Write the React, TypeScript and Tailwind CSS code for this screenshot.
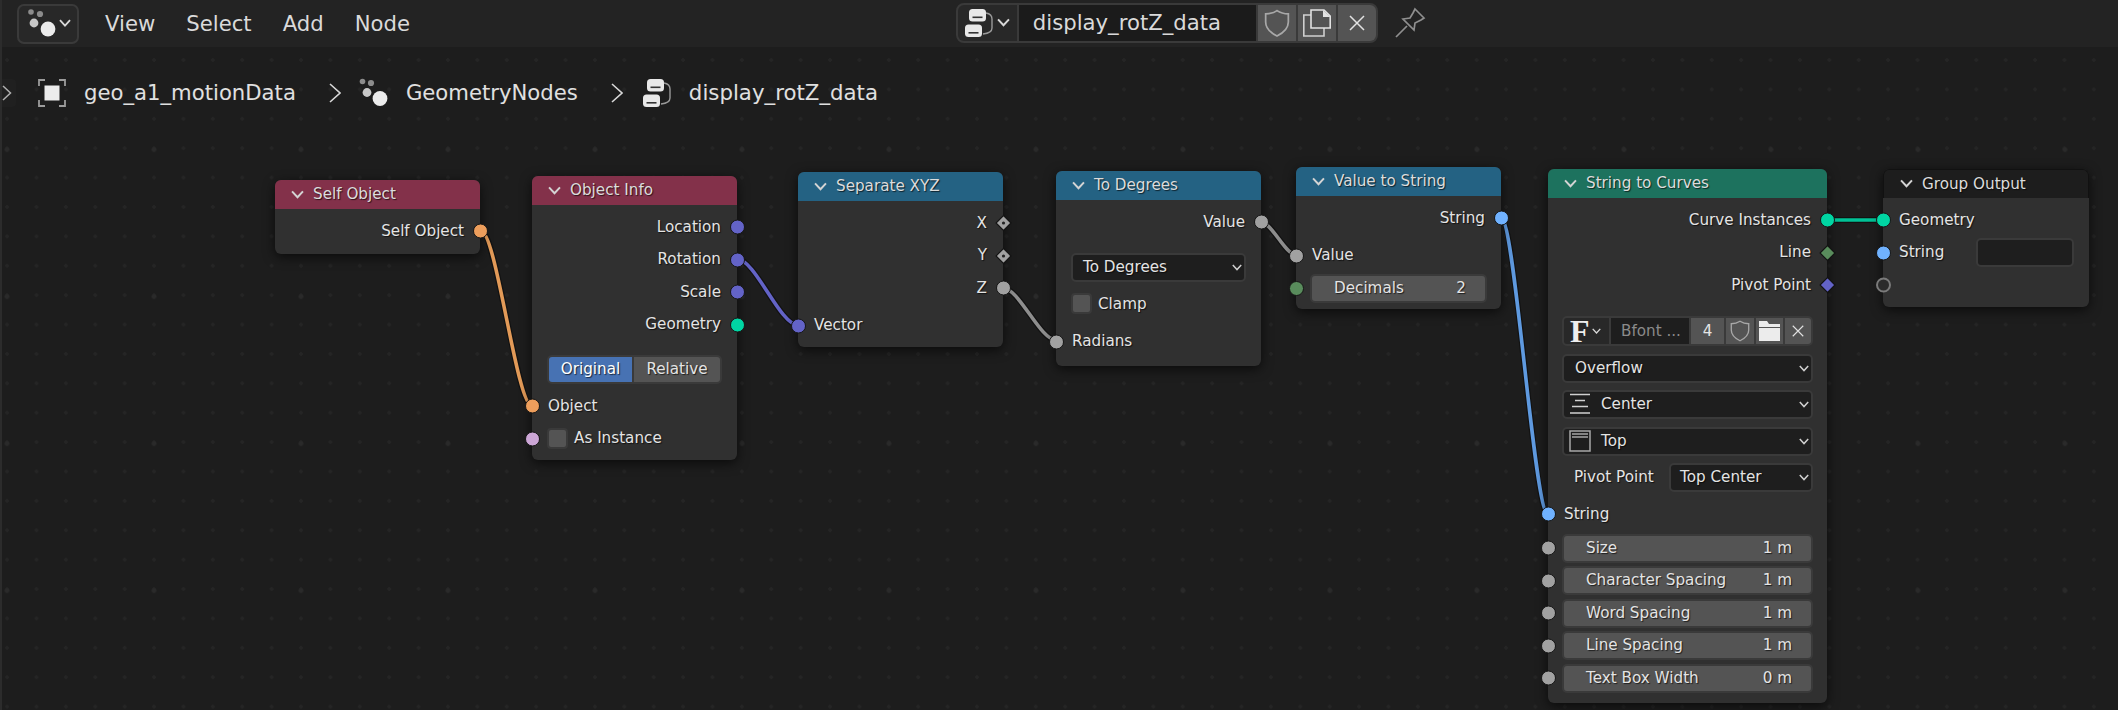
import React from "react";

const FONT = "[font-family:'DejaVu_Sans',sans-serif]";
const TS = "[text-shadow:1px_1px_1px_rgba(0,0,0,0.65)]";

function Chevron({ className = "", size = 10, color = "#d8d8d8", sw = 1.5 }: { className?: string; size?: number; color?: string; sw?: number }) {
  return (
    <svg width={size} height={size * 0.7} viewBox="0 0 10 7" className={className} fill="none">
      <path d="M0.8 1 L5 5.6 L9.2 1" stroke={color} strokeWidth={sw} />
    </svg>
  );
}

function NodesIcon({ className = "" }: { className?: string }) {
  return (
    <svg width="30" height="30" viewBox="0 0 30 30" className={className}>
      <circle cx="3.5" cy="3.5" r="2.8" fill="#8c8c8c" />
      <circle cx="12" cy="5" r="3.1" fill="#8c8c8c" />
      <circle cx="8" cy="14.5" r="4.4" fill="#c8c8c8" />
      <circle cx="21" cy="20.5" r="7.4" fill="#ececec" />
    </svg>
  );
}

function GroupIcon({ className = "" }: { className?: string }) {
  return (
    <svg width="30" height="30" viewBox="0 0 30 30" className={className}>
      <rect x="5" y="1" width="17" height="12.5" rx="3.5" fill="#e8e8e8" />
      <rect x="8.5" y="8.5" width="10" height="1.6" fill="#333" />
      <rect x="1" y="16.5" width="17" height="12.5" rx="3.5" fill="#e8e8e8" />
      <rect x="4.5" y="24" width="10" height="1.6" fill="#333" />
      <path d="M22 5 q6 1 6 6 v9 q0 5 -9 6" fill="none" stroke="#9a9a9a" strokeWidth="1.4" />
    </svg>
  );
}

function Shield({ size = 26, color = "#a8a8a8" }: { size?: number; color?: string }) {
  return (
    <svg width={size} height={size * 1.08} viewBox="0 0 24 26" fill="none">
      <path d="M12 1.5 C15 3.5 18.5 4.5 22.5 4.5 V12 C22.5 18 18 22 12 25 C6 22 1.5 18 1.5 12 V4.5 C5.5 4.5 9 3.5 12 1.5 Z" stroke={color} strokeWidth="1.6" />
    </svg>
  );
}

function CloseX({ size = 16 }: { size?: number }) {
  return (
    <svg width={size} height={size} viewBox="0 0 16 16" fill="none">
      <path d="M1 1 L15 15 M15 1 L1 15" stroke="#e2e2e2" strokeWidth="1.5" />
    </svg>
  );
}

function TopIconButton({ children }: { children: React.ReactNode }) {
  return <div className="w-[38px] h-full bg-[#545454] flex items-center justify-center">{children}</div>;
}

function Socket({ side, color, shape = "circle", hollow = false }: { side: "l" | "r"; color: string; shape?: "circle" | "diamond" | "dotdiamond"; hollow?: boolean }) {
  const pos = side === "l" ? "left-[-7.5px]" : "right-[-7.5px]";
  if (shape !== "circle") {
    return (
      <svg width="17" height="17" viewBox="0 0 16 16" className={`absolute top-1/2 -translate-y-1/2 ${side === "l" ? "left-[-8.5px]" : "right-[-8.5px]"}`}>
        <path d="M8 1 L15 8 L8 15 L1 8 Z" fill={color} stroke="#111" strokeWidth="1" />
        {shape === "dotdiamond" && <circle cx="8" cy="8" r="1.5" fill="#222" />}
      </svg>
    );
  }
  if (hollow) {
    return <span className={`absolute top-1/2 -translate-y-1/2 ${pos} size-[15px] rounded-full border-2 border-[#7a7a7a] bg-[#2b2b2b]`} />;
  }
  return <span style={{ backgroundColor: color }} className={`absolute top-1/2 -translate-y-1/2 ${pos} size-[15px] rounded-full border border-[#161616]`} />;
}

function Output({ label, color, shape }: { label: string; color: string; shape?: "circle" | "diamond" | "dotdiamond" }) {
  return (
    <div className="relative h-[32.5px] flex items-center justify-end pr-[16px]">
      <span className={TS}>{label}</span>
      <Socket side="r" color={color} shape={shape} />
    </div>
  );
}

function Input({ label, color, hollow }: { label?: string; color: string; hollow?: boolean }) {
  return (
    <div className="relative h-[32.5px] flex items-center pl-[16px]">
      <span className={TS}>{label}</span>
      <Socket side="l" color={color} hollow={hollow} />
    </div>
  );
}

function Node({ title, head, pos, children }: { title: string; head: string; pos: string; children: React.ReactNode }) {
  return (
    <div className={`absolute ${pos} rounded-[6px] bg-[#303030] shadow-[0_3px_12px_rgba(0,0,0,0.65)] text-[15.2px] text-[#e4e4e4]`}>
      <div className={`${head} h-[29px] rounded-t-[6px] flex items-center pl-[16px] gap-[9px] text-[#dcdcdc]`}>
        <Chevron size={13} color="#d4d4d4" />
        <span className={TS}>{title}</span>
      </div>
      {children}
    </div>
  );
}

function Select({ children, className = "" }: { children: React.ReactNode; className?: string }) {
  return (
    <div className={`h-[29px] rounded-[5px] bg-[#1e1e1e] border-2 border-[#3a3a3a] flex items-center justify-between pr-[2px] ${className}`}>
      <div className="flex items-center min-w-0">{children}</div>
      <Chevron size={10} color="#d0d0d0" />
    </div>
  );
}

function Check({ label }: { label: string }) {
  return (
    <div className="flex items-center gap-[6px]">
      <span className="size-[21px] rounded-[4px] bg-[#545454] border-2 border-[#3a3a3a]" />
      <span className={TS}>{label}</span>
    </div>
  );
}

function NumField({ label, value, className = "" }: { label: string; value: string; className?: string }) {
  return (
    <div className={`h-[29px] rounded-[5px] bg-[#545454] border-2 border-[#3a3a3a] flex items-center justify-between pl-[22px] pr-[19px] ${className}`}>
      <span className={TS}>{label}</span>
      <span className={TS}>{value}</span>
    </div>
  );
}

function Link({ x1, y1, x2, y2, color }: { x1: number; y1: number; x2: number; y2: number; color: string }) {
  const d = (x2 - x1) * 0.3;
  const p = `M${x1} ${y1} C${x1 + d} ${y1} ${x2 - d} ${y2} ${x2} ${y2}`;
  return (
    <g fill="none">
      <path d={p} stroke="#121212" strokeWidth="6" />
      <path d={p} stroke={color} strokeWidth="3.6" />
    </g>
  );
}

const ORANGE = "#ed9e5c";
const VIOLET = "#6363c7";
const TEAL = "#00d6a3";
const GREY = "#a1a1a1";
const BLUE = "#70b2ff";

export default function App() {
  return (
    <div className={`${FONT} relative w-[2118px] h-[710px] overflow-hidden bg-[#1d1d1d] flex flex-col`}>
      <div className="absolute left-0 top-0 bottom-0 w-[2px] bg-[#2c2c2c] z-20" />
      {/* Header */}
      <header className="h-[47px] bg-[#232323] relative flex items-center text-[21.2px] text-[#dadada] shrink-0">
        <div className="ml-[17px] w-[62px] h-[40px] rounded-[7px] bg-[#282828] border-2 border-[#3a3a3a] flex items-center pl-[8px] gap-[2px]">
          <svg width="30" height="30" viewBox="0 0 30 30">
            <circle cx="4" cy="3" r="2.8" fill="#8c8c8c" />
            <circle cx="13" cy="5" r="3.1" fill="#8c8c8c" />
            <circle cx="7" cy="14" r="4.4" fill="#c8c8c8" />
            <circle cx="21" cy="20" r="7.4" fill="#ececec" />
          </svg>
          <Chevron size={12} />
        </div>
        <nav className="flex ml-[26px] gap-[31px]">
          <span>View</span>
          <span>Select</span>
          <span>Add</span>
          <span>Node</span>
        </nav>
        <div className="absolute left-[956px] top-[3px] w-[422px] h-[40px] rounded-[8px] border-2 border-[#3a3a3a] bg-[#3a3a3a] flex overflow-hidden gap-[2px]">
          <div className="w-[59px] h-full bg-[#282828] flex items-center pl-[6px] gap-[3px]">
            <GroupIcon />
            <Chevron size={13} />
          </div>
          <div className="w-[238px] h-full bg-[#1b1b1b] flex items-center pl-[14px] text-[21.2px]">display_rotZ_data</div>
          <TopIconButton><Shield size={26} /></TopIconButton>
          <TopIconButton>
            <svg width="28" height="28" viewBox="0 0 28 28" fill="none">
              <path d="M21 19 V27 H0.8 V6 H8" stroke="#cfcfcf" strokeWidth="1.6" />
              <path d="M8 1 H21 L27.2 7 V19 H8 Z" stroke="#e2e2e2" strokeWidth="1.6" />
              <path d="M20 1 L27.5 8 H20 Z" fill="#e2e2e2" />
            </svg>
          </TopIconButton>
          <TopIconButton><CloseX /></TopIconButton>
        </div>
        <svg width="32" height="32" viewBox="0 0 32 32" fill="none" className="absolute left-[1394px] top-[7px]">
          <path d="M21 2 L30 11 L27 13 L21 16 L20 23 L9 12 L16 11 L19 6 Z" stroke="#8f8f8f" strokeWidth="1.7" />
          <path d="M13 19 L2 30" stroke="#8f8f8f" strokeWidth="1.7" />
        </svg>
      </header>

      {/* Canvas */}
      <main className="relative flex-1 bg-[#1d1d1d] bg-[radial-gradient(circle,#2a2a2a_2px,transparent_2.5px),radial-gradient(circle,#252525_1.5px,transparent_2px)] bg-[length:147px_147px,29.4px_29.4px] bg-[position:-66.5px_29.2px,-7.6px_-1.7px]">
        {/* Breadcrumbs */}
        <div className="absolute left-0 top-[31px] h-[30px] flex items-center text-[21.2px] text-[#e0e0e0]">
          <div className="w-[16px] h-[28px] flex items-center pl-[2px] bg-[#202020] rounded-r-[4px]">
            <svg width="10" height="16" viewBox="0 0 10 16" fill="none"><path d="M1 1 L8.5 8 L1 15" stroke="#b0b0b0" strokeWidth="1.5" /></svg>
          </div>
          <svg width="28" height="28" viewBox="0 0 28 28" fill="none" className="ml-[22px]">
            <path d="M1 7 V1 H7 M21 1 H27 V7 M27 21 V27 H21 M7 27 H1 V21" stroke="#9c9c9c" strokeWidth="1.8" />
            <rect x="6.5" y="6.5" width="15" height="15" fill="#ececec" />
          </svg>
          <span className="ml-[18px]">geo_a1_motionData</span>
          <svg width="12" height="20" viewBox="0 0 12 20" fill="none" className="ml-[33px]"><path d="M1 1 L11 10 L1 19" stroke="#d8d8d8" strokeWidth="1.6" /></svg>
          <NodesIcon className="ml-[18px]" />
          <span className="ml-[17px]">GeometryNodes</span>
          <svg width="12" height="20" viewBox="0 0 12 20" fill="none" className="ml-[33px]"><path d="M1 1 L11 10 L1 19" stroke="#d8d8d8" strokeWidth="1.6" /></svg>
          <GroupIcon className="ml-[19px]" />
          <span className="ml-[17px] text-[21.3px]">display_rotZ_data</span>
        </div>

        {/* Links */}
        <svg width="2118" height="663" className="absolute left-0 top-0">
          <Link x1={481} y1={184} x2={532} y2={359} color="#e29a58" />
          <Link x1={737} y1={212} x2={798} y2={278} color={VIOLET} />
          <Link x1={1003} y1={241} x2={1056} y2={293} color="#8e8e8e" />
          <Link x1={1261} y1={175} x2={1296} y2={208} color="#8e8e8e" />
          <Link x1={1501} y1={171} x2={1548} y2={467} color="#5f9ae0" />
          <Link x1={1827} y1={173} x2={1883} y2={173} color="#00c296" />
        </svg>

        <Node title="Self Object" head="bg-[#83314a]" pos="left-[275px] top-[133px] w-[205px]">
          <div className="pt-[6px] pb-[6px]">
            <Output label="Self Object" color={ORANGE} />
          </div>
        </Node>

        <Node title="Object Info" head="bg-[#83314a]" pos="left-[532px] top-[129px] w-[205px]">
          <div className="pt-[6px] pb-[5px]">
            <Output label="Location" color={VIOLET} />
            <Output label="Rotation" color={VIOLET} />
            <Output label="Scale" color={VIOLET} />
            <Output label="Geometry" color={TEAL} />
            <div className="mx-[15px] mt-[14px] mb-[6px] h-[29px] rounded-[5px] border-2 border-[#3a3a3a] bg-[#3a3a3a] flex gap-[2px] overflow-hidden">
              <div className={`flex-1 bg-[#4772b3] flex items-center justify-center text-white ${TS}`}>Original</div>
              <div className={`w-[86px] bg-[#545454] flex items-center justify-center ${TS}`}>Relative</div>
            </div>
            <Input label="Object" color={ORANGE} />
            <div className="relative h-[32.5px] flex items-center pl-[15px]">
              <Check label="As Instance" />
              <Socket side="l" color="#cca6d6" />
            </div>
          </div>
        </Node>

        <Node title="Separate XYZ" head="bg-[#246283]" pos="left-[798px] top-[125px] w-[205px]">
          <div className="pt-[6px] pb-[5px]">
            <Output label="X" color={GREY} shape="dotdiamond" />
            <Output label="Y" color={GREY} shape="dotdiamond" />
            <Output label="Z" color={GREY} />
            <div className="h-[5px]" />
            <Input label="Vector" color={VIOLET} />
          </div>
        </Node>

        <Node title="To Degrees" head="bg-[#246283]" pos="left-[1056px] top-[124px] w-[205px]">
          <div className="pt-[6px] pb-[8px]">
            <Output label="Value" color={GREY} />
            <div className="mx-[15px] mt-[14px]">
              <Select><span className={`pl-[10px] ${TS}`}>To Degrees</span></Select>
            </div>
            <div className="mx-[15px] mt-[11px] mb-[10px]"><Check label="Clamp" /></div>
            <Input label="Radians" color={GREY} />
          </div>
        </Node>

        <Node title="Value to String" head="bg-[#246283]" pos="left-[1296px] top-[120px] w-[205px]">
          <div className="pt-[6px] pb-[6px]">
            <Output label="String" color={BLUE} />
            <div className="h-[5px]" />
            <Input label="Value" color={GREY} />
            <div className="relative px-[14px] pt-[2px]">
              <NumField label="Decimals" value="2" />
              <span className="absolute left-[-7.5px] top-[9px] size-[15px] rounded-full border border-[#161616] bg-[#598c5c]" />
            </div>
          </div>
        </Node>

        <Node title="String to Curves" head="bg-[#1d725e]" pos="left-[1548px] top-[122px] w-[279px]">
          <div className="pt-[6px]">
            <Output label="Curve Instances" color={TEAL} />
            <Output label="Line" color="#598c5c" shape="diamond" />
            <Output label="Pivot Point" color={VIOLET} shape="diamond" />
            <div className="mx-[14px] mt-[14.5px] h-[30px] rounded-[5px] border-2 border-[#3a3a3a] bg-[#3a3a3a] flex gap-[2px]">
              <div className="w-[45px] bg-[#282828] rounded-l-[3px] flex items-center pl-[6px] gap-[2px]">
                <span className="[font-family:'Liberation_Serif',serif] font-bold text-[32px] leading-[26px] text-[#eee]">F</span>
                <Chevron size={9} />
              </div>
              <div className="w-[78px] bg-[#1e1e1e] flex items-center pl-[10px] text-[#8a8a8a] whitespace-nowrap">Bfont ...</div>
              <div className="w-[33px] bg-[#545454] flex items-center justify-center">4</div>
              <div className="w-[28px] bg-[#545454] flex items-center justify-center"><Shield size={20} /></div>
              <div className="w-[27px] bg-[#545454] flex items-center justify-center">
                <svg width="21" height="20" viewBox="0 0 21 20" fill="#ececec">
                  <path d="M0 0 H8 L10 3 H21 V6 H0 Z" />
                  <rect y="7" width="21" height="13" />
                </svg>
              </div>
              <div className="flex-1 bg-[#545454] rounded-r-[3px] flex items-center justify-center"><CloseX size={12} /></div>
            </div>
            <div className="mx-[14px] mt-[8px]">
              <Select><span className={`pl-[11px] ${TS}`}>Overflow</span></Select>
            </div>
            <div className="mx-[14px] mt-[7px]">
              <Select>
                <svg width="22" height="22" viewBox="0 0 22 22" stroke="#cfcfcf" strokeWidth="1.5" className="ml-[5px]">
                  <path d="M1 1.5 H21 M6 7.5 H16 M3 13.5 H19 M1 20 H21" />
                </svg>
                <span className={`pl-[10px] ${TS}`}>Center</span>
              </Select>
            </div>
            <div className="mx-[14px] mt-[8px]">
              <Select>
                <svg width="22" height="22" viewBox="0 0 22 22" fill="none" stroke="#a8a8a8" strokeWidth="1.5" className="ml-[5px]">
                  <rect x="1" y="1" width="20" height="20" />
                  <path d="M3 4 H19 M3 7 H19" />
                </svg>
                <span className={`pl-[10px] ${TS}`}>Top</span>
              </Select>
            </div>
            <div className="mx-[14px] mt-[7px] flex items-center">
              <span className={`w-[107px] pl-[12px] ${TS}`}>Pivot Point</span>
              <Select className="flex-1"><span className={`pl-[9px] ${TS}`}>Top Center</span></Select>
            </div>
            <div className="mt-[6px]"><Input label="String" color={BLUE} /></div>
            <div className="flex flex-col gap-[3.5px] mx-[14px] mt-[3px] pb-[10px]">
              {[
                ["Size", "1 m"],
                ["Character Spacing", "1 m"],
                ["Word Spacing", "1 m"],
                ["Line Spacing", "1 m"],
                ["Text Box Width", "0 m"],
              ].map(([l, v]) => (
                <div key={l} className="relative">
                  <NumField label={l} value={v} />
                  <span className="absolute left-[-21.5px] top-1/2 -translate-y-1/2 size-[15px] rounded-full border border-[#161616] bg-[#a1a1a1]" />
                </div>
              ))}
            </div>
          </div>
        </Node>

        <Node title="Group Output" head="bg-[#1d1d1d] border-t border-x border-[#111]" pos="left-[1883px] top-[122px] w-[206px]">
          <div className="pt-[6px] pb-[5px]">
            <Input label="Geometry" color={TEAL} />
            <div className="relative h-[32.5px] flex items-center pl-[16px] justify-between pr-[15px]">
              <span className={TS}>String</span>
              <span className="w-[98px] h-[29px] rounded-[5px] bg-[#1e1e1e] border-2 border-[#3a3a3a]" />
              <Socket side="l" color={BLUE} />
            </div>
            <Input color={GREY} hollow />
          </div>
        </Node>
      </main>
    </div>
  );
}
